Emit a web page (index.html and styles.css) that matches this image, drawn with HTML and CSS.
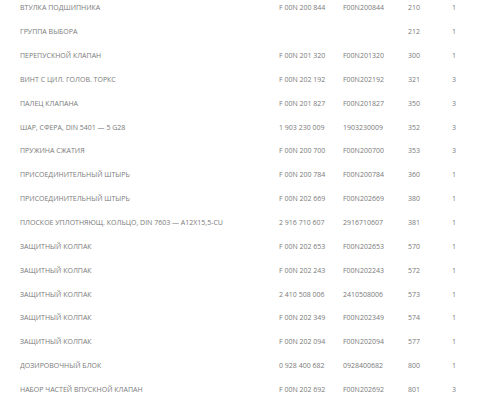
FILE: index.html
```html
<!DOCTYPE html>
<html lang="ru">
<head>
<meta charset="utf-8">
<link rel="stylesheet" href="styles.css">
</head>
<body>
<div class="parts">
  <div class="row"><span class="name">ВТУЛКА ПОДШИПНИКА</span><span class="code">F 00N 200 844</span><span class="code2">F00N200844</span><span class="pos">210</span><span class="qty">1</span></div>
  <div class="row"><span class="name">ГРУППА ВЫБОРА</span><span class="code"></span><span class="code2"></span><span class="pos">212</span><span class="qty">1</span></div>
  <div class="row"><span class="name">ПЕРЕПУСКНОЙ КЛАПАН</span><span class="code">F 00N 201 320</span><span class="code2">F00N201320</span><span class="pos">300</span><span class="qty">1</span></div>
  <div class="row"><span class="name">ВИНТ С ЦИЛ. ГОЛОВ. ТОРКС</span><span class="code">F 00N 202 192</span><span class="code2">F00N202192</span><span class="pos">321</span><span class="qty">3</span></div>
  <div class="row"><span class="name">ПАЛЕЦ КЛАПАНА</span><span class="code">F 00N 201 827</span><span class="code2">F00N201827</span><span class="pos">350</span><span class="qty">3</span></div>
  <div class="row"><span class="name">ШАР, СФЕРА, DIN 5401 — 5 G28</span><span class="code">1 903 230 009</span><span class="code2">1903230009</span><span class="pos">352</span><span class="qty">3</span></div>
  <div class="row"><span class="name">ПРУЖИНА СЖАТИЯ</span><span class="code">F 00N 200 700</span><span class="code2">F00N200700</span><span class="pos">353</span><span class="qty">3</span></div>
  <div class="row"><span class="name">ПРИСОЕДИНИТЕЛЬНЫЙ ШТЫРЬ</span><span class="code">F 00N 200 784</span><span class="code2">F00N200784</span><span class="pos">360</span><span class="qty">1</span></div>
  <div class="row"><span class="name">ПРИСОЕДИНИТЕЛЬНЫЙ ШТЫРЬ</span><span class="code">F 00N 202 669</span><span class="code2">F00N202669</span><span class="pos">380</span><span class="qty">1</span></div>
  <div class="row"><span class="name">ПЛОСКОЕ УПЛОТНЯЮЩ. КОЛЬЦО, DIN 7603 — A12X15,5-CU</span><span class="code">2 916 710 607</span><span class="code2">2916710607</span><span class="pos">381</span><span class="qty">1</span></div>
  <div class="row"><span class="name">ЗАЩИТНЫЙ КОЛПАК</span><span class="code">F 00N 202 653</span><span class="code2">F00N202653</span><span class="pos">570</span><span class="qty">1</span></div>
  <div class="row"><span class="name">ЗАЩИТНЫЙ КОЛПАК</span><span class="code">F 00N 202 243</span><span class="code2">F00N202243</span><span class="pos">572</span><span class="qty">1</span></div>
  <div class="row"><span class="name">ЗАЩИТНЫЙ КОЛПАК</span><span class="code">2 410 508 006</span><span class="code2">2410508006</span><span class="pos">573</span><span class="qty">1</span></div>
  <div class="row"><span class="name">ЗАЩИТНЫЙ КОЛПАК</span><span class="code">F 00N 202 349</span><span class="code2">F00N202349</span><span class="pos">574</span><span class="qty">1</span></div>
  <div class="row"><span class="name">ЗАЩИТНЫЙ КОЛПАК</span><span class="code">F 00N 202 094</span><span class="code2">F00N202094</span><span class="pos">577</span><span class="qty">1</span></div>
  <div class="row"><span class="name">ДОЗИРОВОЧНЫЙ БЛОК</span><span class="code">0 928 400 682</span><span class="code2">0928400682</span><span class="pos">800</span><span class="qty">1</span></div>
  <div class="row"><span class="name">НАБОР ЧАСТЕЙ ВПУСКНОЙ КЛАПАН</span><span class="code">F 00N 202 692</span><span class="code2">F00N202692</span><span class="pos">801</span><span class="qty">3</span></div>
</div>
</body>
</html>
```
FILE: styles.css
```css
html, body {
  margin: 0;
  padding: 0;
  background: #ffffff;
}
body {
  font-family: "Open Sans", "Noto Sans", sans-serif;
  font-size: 7px;
  color: #7a7a7a;
  overflow: hidden;
}
.parts {
  margin-top: -4px;
}
.row {
  display: grid;
  grid-template-columns: 259px 64px 65px 44px 20px;
  align-items: center;
  height: 23.85px;
  padding-left: 20px;
  white-space: nowrap;
}
```
